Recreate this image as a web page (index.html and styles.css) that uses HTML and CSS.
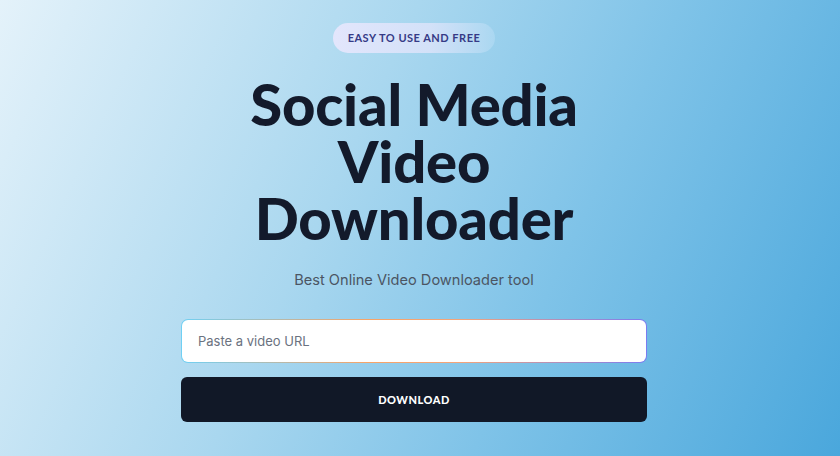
FILE: index.html
```html
<!DOCTYPE html>
<html lang="en">
<head>
<meta charset="utf-8">
<title>Social Media Video Downloader</title>
<link rel="stylesheet" href="styles.css">
</head>
<body>
<main class="hero">
  <span class="badge">EASY TO USE AND FREE</span>
  <h1 class="title">Social Media<br>Video<br>Downloader</h1>
  <p class="subtitle">Best Online Video Downloader tool</p>
  <form class="form" onsubmit="return false">
    <div class="field">
      <input class="input" type="text" placeholder="Paste a video URL">
    </div>
    <button class="button" type="submit">DOWNLOAD</button>
  </form>
</main>
</body>
</html>
```
FILE: styles.css
```css
html, body {
  margin: 0;
  padding: 0;
  height: 100%;
}
body {
  background: linear-gradient(115deg, #e4f2fa 0%, #a9d7ef 40%, #7fc3e8 65%, #4aa7dc 100%);
  font-family: "Inter", "Liberation Sans", sans-serif;
  overflow: hidden;
}
.hero {
  display: flex;
  flex-direction: column;
  align-items: center;
  padding: 23px 12px 0 0;
}
.badge {
  display: inline-block;
  height: 30px;
  line-height: 30px;
  padding: 0 15px;
  border-radius: 15px;
  background: linear-gradient(90deg, #e3e6fc 0%, #d3e1f8 60%, rgba(180, 220, 244, 0.6) 100%);
  color: #363a86;
  font-family: "Lato", "Inter", sans-serif;
  font-weight: 700;
  font-size: 11px;
  letter-spacing: 0.5px;
}
.title {
  margin: 22px 0 0;
  font-family: "Lato", "Open Sans", sans-serif;
  font-weight: 900;
  font-size: 58px;
  line-height: 57px;
  color: #131a2b;
  text-align: center;
  letter-spacing: -0.2px;
}
.subtitle {
  margin: 25px 0 0;
  font-size: 14.6px;
  color: #4b5563;
}
.form {
  margin-top: 30px;
  width: 466px;
  display: flex;
  flex-direction: column;
  gap: 14px;
}
.field {
  padding: 1px;
  border-radius: 7px;
  background: linear-gradient(90deg, #6fd0f4 0%, #f7a468 40%, #f4a47a 60%, #7a7cf2 100%);
}
.input {
  display: block;
  box-sizing: border-box;
  width: 100%;
  height: 42px;
  border: 0;
  border-radius: 6px;
  background: #ffffff;
  padding: 0 16px;
  font-family: "Inter", sans-serif;
  font-size: 13px;
  color: #111827;
  outline: none;
}
.input::placeholder {
  color: #6b7280;
}
.button {
  height: 45px;
  border: 0;
  border-radius: 6px;
  background: #111827;
  color: #ffffff;
  font-family: "Lato", sans-serif;
  font-weight: 900;
  font-size: 11px;
  letter-spacing: 0.5px;
  cursor: pointer;
}
```
